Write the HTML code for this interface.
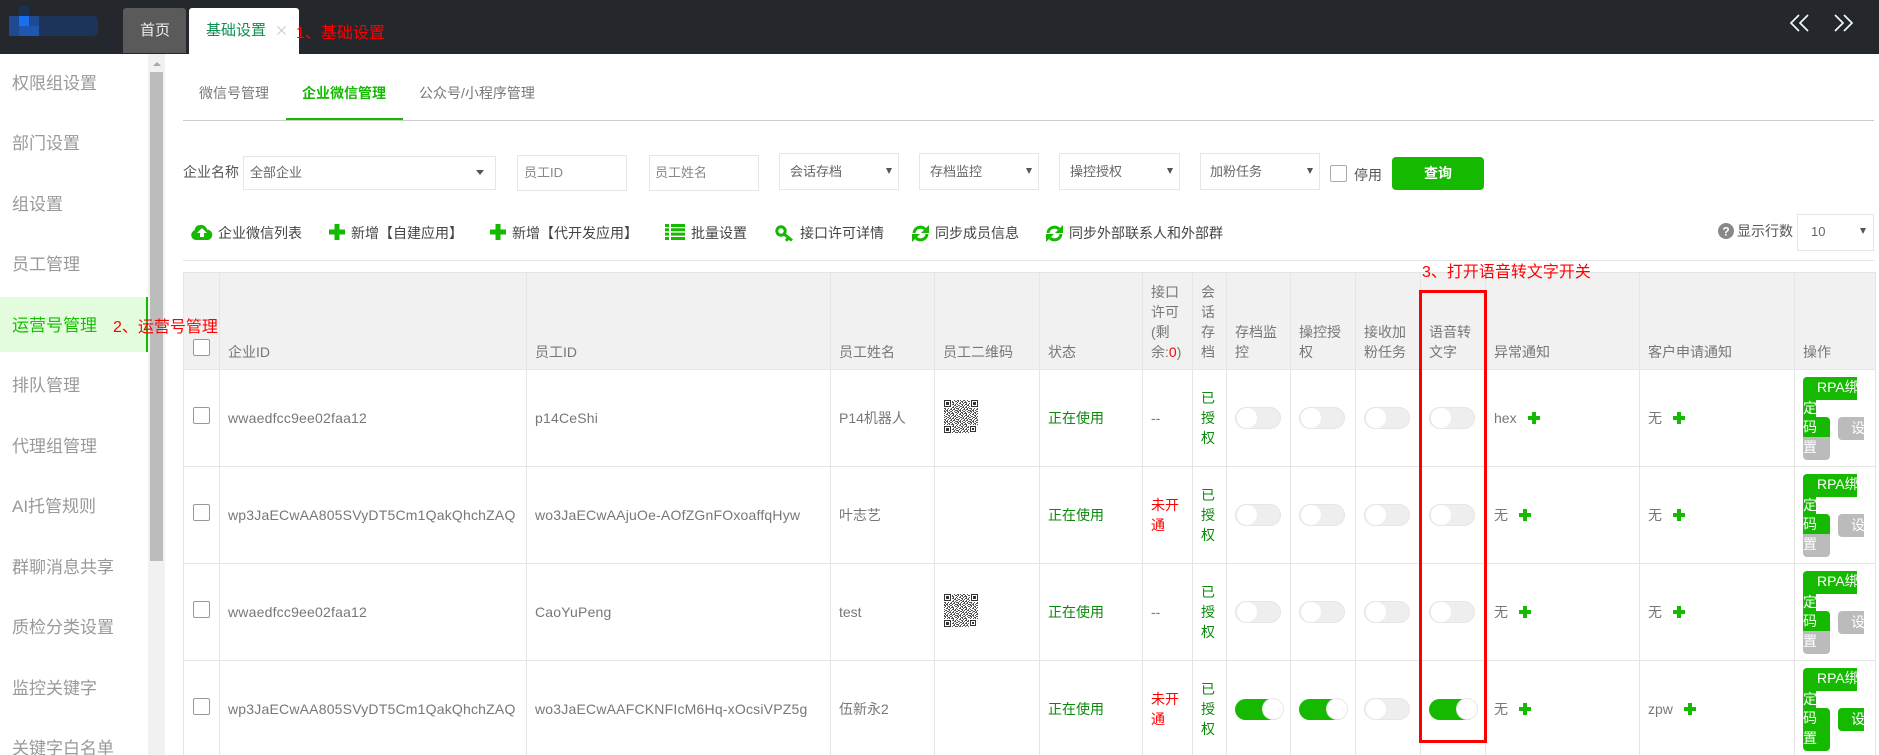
<!DOCTYPE html>
<html lang="zh-CN"><head><meta charset="utf-8"><title>企业微信管理</title>
<style>
html,body{margin:0;padding:0;width:1879px;height:755px;overflow:hidden;background:#fff}
body{position:relative;font:14px/20px "Liberation Sans","Noto Sans CJK SC",sans-serif;color:#666}
.a,.t,.box,.ops{position:absolute}
.t{white-space:nowrap;line-height:20px}
.s{font-size:17px;color:#999;left:12px;line-height:30px}
.r{color:#f00;font-size:16px}
.f{font-size:13px}
.box{border:1px solid #e6e6e6;box-sizing:border-box;background:#fff}
.arr{position:absolute;width:0;height:0;border-left:3px solid transparent;border-right:3px solid transparent;border-top:6px solid #555}
.d{color:#444}
table{position:absolute;left:183px;top:272px;width:1692px;border-collapse:collapse;table-layout:fixed}
th,td{border:1px solid #e5e5e5;padding:0 8px;height:96px;box-sizing:border-box;font-weight:400;text-align:left;overflow:hidden;white-space:nowrap;color:#777}
th{background:#f1f1f1;vertical-align:bottom;padding-bottom:7px;color:#777}
td{vertical-align:middle;background:#fff}
.l{letter-spacing:.2px}
.g{color:#0a8a0a}.red{color:#f00}
.cb{display:block;position:relative;top:-3px;width:17px;height:17px;box-sizing:border-box;border:1px solid #999;border-radius:2px;background:#fff;margin-left:1px}
.sw{display:block;position:relative;width:46px;height:22px;box-sizing:border-box;border-radius:11px;background:#eee;box-shadow:0 0 0 1px #e6e6e6 inset}
.sw i{position:absolute;left:2px;top:1px;width:20px;height:20px;border-radius:50%;background:#fff}
.on{background:#14b900;width:48px;height:21px;box-shadow:none}
.on i{left:28px;top:.5px;box-shadow:0 0 0 1px #e6e6e6}
.p{display:inline-block;position:relative;width:12px;height:12px;margin-left:11px;vertical-align:-1px}
.p:before,.p:after{content:"";position:absolute;background:#14b900}
.p:before{left:4px;top:0;width:4px;height:12px}
.p:after{left:0;top:4px;width:12px;height:4px}
.ops{left:1803px;width:70px;height:97px;color:#fff}
.ops div{position:absolute;overflow:hidden;white-space:nowrap;background:#14b900;color:#fff;line-height:20px}
.b1{left:0;top:8px;width:54px;height:23px;border-radius:4px 0 0 0;padding-left:14px;box-sizing:border-box;line-height:21px!important}
.b2{left:0;top:31px;width:13px;height:17px;line-height:17px!important}
.b3{left:0;top:48px;width:27px;height:20px;border-radius:0 4px 0 0}
.b4{left:0;top:68px;width:27px;height:23px;border-radius:0 0 4px 4px;background:#bbb!important}
.b5{left:35px;top:48px;width:26px;height:23px;border-radius:4px 0 0 4px;padding-left:13px;box-sizing:border-box;background:#bbb!important;line-height:23px!important}
.on2 .b4,.on2 .b5{background:#14b900!important}
</style></head><body>

<div class="a" style="left:0;top:0;width:1879px;height:54px;background:#24272c"></div>
<div class="a" style="left:9px;top:16px;width:30px;height:20px;background:#1f4a92"></div>
<div class="a" style="left:19px;top:6px;width:10px;height:10px;background:#1c3050"></div>
<div class="a" style="left:19px;top:16px;width:10px;height:10px;background:#1a6ef0"></div>
<div class="a" style="left:19px;top:26px;width:20px;height:10px;background:#1f57b0"></div>
<div class="a" style="left:39px;top:16px;width:59px;height:20px;border-radius:0 5px 5px 0;background:#1c335a"></div>

<div class="a" style="left:123px;top:8px;width:63px;height:45px;background:#5a5a5a;border-radius:3px 3px 0 0"></div>
<div class="t" style="left:140px;top:21px;font-size:15px;color:#eee">首页</div>
<div class="a" style="left:189px;top:8px;width:110px;height:46px;background:#fff;border-radius:3px 3px 0 0"></div>
<div class="t" style="left:206px;top:21px;font-size:15px;color:#0d8f50">基础设置</div>
<svg class="a" style="left:277px;top:26px" width="9" height="9"><path d="M.5.5l8 8M8.5.5l-8 8" stroke="#ccc" stroke-width="1.2"/></svg>
<div class="t r" style="left:296px;top:24px">1、基础设置</div>

<svg class="a" style="left:1788px;top:13px" width="66" height="20" fill="none" stroke="#f4f8ff" stroke-width="1.7"><path d="M11 2L3 10l8 8M20 2l-8 8 8 8M47 2l8 8-8 8M56 2l8 8-8 8"/></svg>

<div class="a" style="left:148px;top:54px;width:17px;height:701px;background:#f1f1f1"></div>
<div class="a" style="left:150px;top:72px;width:13px;height:489px;background:#bcbcbc"></div>
<div class="a" style="left:153px;top:62px;width:0;height:0;border-left:4px solid transparent;border-right:4px solid transparent;border-bottom:4px solid #a8a8a8"></div>

<div class="a" style="left:0;top:297px;width:146px;height:55px;background:#e3fcde;border-right:2px solid #14b900"></div>
<div class="t s" style="top:69px">权限组设置</div>
<div class="t s" style="top:129px">部门设置</div>
<div class="t s" style="top:190px">组设置</div>
<div class="t s" style="top:250px">员工管理</div>
<div class="t s" style="top:311px;color:#14c000">运营号管理</div>
<div class="t s" style="top:371px">排队管理</div>
<div class="t s" style="top:432px">代理组管理</div>
<div class="t s" style="top:492px">AI托管规则</div>
<div class="t s" style="top:553px">群聊消息共享</div>
<div class="t s" style="top:613px">质检分类设置</div>
<div class="t s" style="top:674px">监控关键字</div>
<div class="t s" style="top:734px">关键字白名单</div>

<div class="a" style="left:183px;top:120px;width:1691px;height:1px;background:#ccc"></div>
<div class="a" style="left:286px;top:118px;width:117px;height:2px;background:#14b900"></div>
<div class="t" style="left:199px;top:83px;color:#777">微信号管理</div>
<div class="t" style="left:302px;top:83px;color:#14b900;font-weight:700">企业微信管理</div>
<div class="t" style="left:419px;top:83px;color:#777">公众号/小程序管理</div>

<div class="t d" style="left:183px;top:162px;color:#555">企业名称</div>
<div class="box" style="left:243px;top:156px;width:253px;height:34px"></div>
<div class="t f" style="left:250px;top:163px">全部企业</div>
<div class="arr" style="left:476px;top:170px;border-left-width:4px;border-right-width:4px;border-top-width:5px"></div>
<div class="box" style="left:517px;top:155px;width:110px;height:36px"></div>
<div class="t f" style="left:524px;top:163px;color:#888">员工ID</div>
<div class="box" style="left:649px;top:155px;width:110px;height:36px"></div>
<div class="t f" style="left:655px;top:163px;color:#888">员工姓名</div>
<div class="box" style="left:779px;top:153px;width:120px;height:37px"></div>
<div class="t f" style="left:790px;top:162px">会话存档</div>
<div class="arr" style="left:886px;top:168px"></div>
<div class="box" style="left:919px;top:153px;width:120px;height:37px"></div>
<div class="t f" style="left:930px;top:162px">存档监控</div>
<div class="arr" style="left:1026px;top:168px"></div>
<div class="box" style="left:1059px;top:153px;width:121px;height:37px"></div>
<div class="t f" style="left:1070px;top:162px">操控授权</div>
<div class="arr" style="left:1167px;top:168px"></div>
<div class="box" style="left:1200px;top:153px;width:120px;height:37px"></div>
<div class="t f" style="left:1210px;top:162px">加粉任务</div>
<div class="arr" style="left:1307px;top:168px"></div>
<div class="a" style="left:1330px;top:165px;width:17px;height:17px;box-sizing:border-box;border:1px solid #aaa;border-radius:2px"></div>
<div class="t" style="left:1354px;top:165px;color:#555">停用</div>
<div class="a" style="left:1392px;top:157px;width:92px;height:33px;background:#14b900;border-radius:4px;color:#fff;text-align:center;line-height:33px;font-weight:700">查询</div>

<svg class="a" style="left:191px;top:224px" width="22" height="16" viewBox="0 0 22 16"><path d="M5 16a5 5 0 0 1-1.500-9.700A5.500 5.500 0 0 1 9 1a6 6 0 0 1 7 4.500A5.300 5.300 0 0 1 17 16z" fill="#14b900"/><path d="M11 4l5 5h-3v4H9V9H6z" fill="#fff"/></svg>
<div class="t d" style="left:218px;top:223px">企业微信列表</div>
<svg class="a" style="left:329px;top:224px" width="16" height="16"><path d="M5.500 0h5v5.500h5.500v5h-5.500v5.500h-5v-5.500H0v-5h5.500z" fill="#14b900"/></svg>
<div class="t d" style="left:351px;top:223px">新增【自建应用】</div>
<svg class="a" style="left:490px;top:224px" width="16" height="16"><path d="M5.500 0h5v5.500h5.500v5h-5.500v5.500h-5v-5.500H0v-5h5.500z" fill="#14b900"/></svg>
<div class="t d" style="left:512px;top:223px">新增【代开发应用】</div>
<svg class="a" style="left:665px;top:224px" width="20" height="16" fill="#14b900"><path d="M0 0h4v3H0zM6 0h14v3H6zM0 4.300h4v3H0zM6 4.300h14v3H6zM0 8.600h4v3H0zM6 8.600h14v3H6zM0 13h4v3H0zM6 13h14v3H6z"/></svg>
<div class="t d" style="left:691px;top:223px">批量设置</div>
<svg class="a" style="left:775px;top:225px" width="19" height="17" fill="none" stroke="#14b900" stroke-width="3"><circle cx="6" cy="6" r="4.200"/><path d="M9 9l8 6.500M13.500 12.800l-2.500 3"/></svg>
<div class="t d" style="left:800px;top:223px">接口许可详情</div>
<svg class="a" style="left:912px;top:225px" width="17" height="17" viewBox="0 0 17 17"><g fill="none" stroke="#14b900" stroke-width="3"><path d="M2 8A6.500 6.500 0 0 1 13 4"/><path d="M15 9A6.500 6.500 0 0 1 4 13"/></g><path d="M17 0v8h-8zM0 17V9h8z" fill="#14b900"/></svg>
<div class="t d" style="left:935px;top:223px">同步成员信息</div>
<svg class="a" style="left:1046px;top:225px" width="17" height="17" viewBox="0 0 17 17"><g fill="none" stroke="#14b900" stroke-width="3"><path d="M2 8A6.500 6.500 0 0 1 13 4"/><path d="M15 9A6.500 6.500 0 0 1 4 13"/></g><path d="M17 0v8h-8zM0 17V9h8z" fill="#14b900"/></svg>
<div class="t d" style="left:1069px;top:223px">同步外部联系人和外部群</div>

<svg class="a" style="left:1718px;top:223px" width="16" height="16"><circle cx="8" cy="8" r="8" fill="#888"/><text x="8" y="12.500" text-anchor="middle" font-size="12" font-weight="700" font-family="Liberation Sans" fill="#fff">?</text></svg>
<div class="t" style="left:1737px;top:221px;color:#555">显示行数</div>
<div class="box" style="left:1797px;top:214px;width:77px;height:37px"></div>
<div class="t f" style="left:1811px;top:222px">10</div>
<div class="arr" style="left:1860px;top:228px"></div>
<div class="a" style="left:183px;top:260px;width:1691px;height:1px;background:#e5e5e5"></div>

<table>
<colgroup><col style="width:36px"><col style="width:307px"><col style="width:304px"><col style="width:104px"><col style="width:105px"><col style="width:103px"><col style="width:50px"><col style="width:34px"><col style="width:64px"><col style="width:65px"><col style="width:65px"><col style="width:65px"><col style="width:154px"><col style="width:155px"><col style="width:81px"></colgroup>
<tr style="height:97px">
<th><span class="cb" style="margin-bottom:3px"></span></th><th>企业ID</th><th>员工ID</th><th>员工姓名</th><th>员工二维码</th><th>状态</th>
<th>接口<br>许可<br>(剩<br>余:<span class="red">0</span>)</th><th>会<br>话<br>存<br>档</th><th>存档监<br>控</th><th>操控授<br>权</th><th>接收加<br>粉任务</th><th>语音转<br>文字</th><th>异常通知</th><th>客户申请通知</th><th>操作</th>
</tr>
<tr style="height:97px">
<td><span class="cb"></span></td><td class="l">wwaedfcc9ee02faa12</td><td class="l">p14CeShi</td><td>P14机器人</td><td></td><td class="g">正在使用</td><td>--</td><td class="g">已<br>授<br>权</td>
<td><span class="sw"><i></i></span></td><td><span class="sw"><i></i></span></td><td><span class="sw"><i></i></span></td><td><span class="sw"><i></i></span></td>
<td>hex<span class="p"></span></td><td>无<span class="p"></span></td><td></td>
</tr>
<tr style="height:97px">
<td><span class="cb"></span></td><td class="l">wp3JaECwAA805SVyDT5Cm1QakQhchZAQ</td><td class="l">wo3JaECwAAjuOe-AOfZGnFOxoaffqHyw</td><td>叶志艺</td><td></td><td class="g">正在使用</td><td class="red">未开<br>通</td><td class="g">已<br>授<br>权</td>
<td><span class="sw"><i></i></span></td><td><span class="sw"><i></i></span></td><td><span class="sw"><i></i></span></td><td><span class="sw"><i></i></span></td>
<td>无<span class="p"></span></td><td>无<span class="p"></span></td><td></td>
</tr>
<tr style="height:97px">
<td><span class="cb"></span></td><td class="l">wwaedfcc9ee02faa12</td><td class="l">CaoYuPeng</td><td>test</td><td></td><td class="g">正在使用</td><td>--</td><td class="g">已<br>授<br>权</td>
<td><span class="sw"><i></i></span></td><td><span class="sw"><i></i></span></td><td><span class="sw"><i></i></span></td><td><span class="sw"><i></i></span></td>
<td>无<span class="p"></span></td><td>无<span class="p"></span></td><td></td>
</tr>
<tr style="height:97px">
<td><span class="cb"></span></td><td class="l">wp3JaECwAA805SVyDT5Cm1QakQhchZAQ</td><td class="l">wo3JaECwAAFCKNFIcM6Hq-xOcsiVPZ5g</td><td>伍新永2</td><td></td><td class="g">正在使用</td><td class="red">未开<br>通</td><td class="g">已<br>授<br>权</td>
<td><span class="sw on"><i></i></span></td><td><span class="sw on"><i></i></span></td><td><span class="sw"><i></i></span></td><td><span class="sw on"><i></i></span></td>
<td>无<span class="p"></span></td><td>zpw<span class="p"></span></td><td></td>
</tr>
</table>

<svg width="0" height="0" style="position:absolute"><defs>
<pattern id="n" width="13" height="11" patternUnits="userSpaceOnUse"><path fill="none" stroke="#333" stroke-width="1" d="M0 .5h2M3 .5h1M6 .5h2M10 .5h1M1 1.500h1M4 1.500h2M8 1.500h1M11 1.500h2M0 2.500h1M3 2.500h1M5 2.500h1M7 2.500h3M2 3.500h2M6 3.500h1M9 3.500h1M12 3.500h1M0 4.500h1M4 4.500h2M8 4.500h2M11 4.500h1M1 5.500h2M5 5.500h1M7 5.500h1M10 5.500h2M0 6.500h1M3 6.500h2M6 6.500h1M9 6.500h1M12 6.500h1M2 7.500h1M5 7.500h2M8 7.500h2M11 7.500h1M0 8.500h2M4 8.500h1M7 8.500h1M10 8.500h1M12 8.500h1M1 9.500h1M3 9.500h1M6 9.500h2M9 9.500h2M0 10.500h1M2 10.500h2M5 10.500h1M8 10.500h1M11 10.500h2"/></pattern>
<g id="qr"><rect width="34" height="33" fill="url(#n)" opacity=".85"/>
<path fill="#fff" d="M0 0h8v8H0zM26 0h8v8h-8zM0 25h8v8H0zM25 25h9v8h-9z"/>
<path fill="#333" fill-rule="evenodd" d="M0 0h7v7H0zM1 1v5h5V1zM2 2h3v3H2zM27 0h7v7h-7zM28 1v5h5V1zM29 2h3v3h-3zM0 26h7v7H0zM1 27v5h5v-5zM2 28h3v3H2zM26 26h6v6h-6zM27 27v4h4v-4zM28 28h2v2h-2z"/></g>
</defs></svg>
<svg class="a" style="left:944px;top:400px" width="34" height="33" viewBox="0 0 34 33"><use href="#qr"/></svg>
<svg class="a" style="left:944px;top:594px" width="34" height="33" viewBox="0 0 34 33"><use href="#qr"/></svg>

<div class="ops" style="top:369px"><div class="b1">RPA绑</div><div class="b2">定</div><div class="b3">码</div><div class="b4">置</div><div class="b5">设</div></div>
<div class="ops" style="top:466px"><div class="b1">RPA绑</div><div class="b2">定</div><div class="b3">码</div><div class="b4">置</div><div class="b5">设</div></div>
<div class="ops" style="top:563px"><div class="b1">RPA绑</div><div class="b2">定</div><div class="b3">码</div><div class="b4">置</div><div class="b5">设</div></div>
<div class="ops on2" style="top:660px"><div class="b1">RPA绑</div><div class="b2">定</div><div class="b3">码</div><div class="b4">置</div><div class="b5">设</div></div>

<div class="a" style="left:1419px;top:290px;width:68px;height:453px;box-sizing:border-box;border:3px solid #f00"></div>
<div class="t r" style="left:1422px;top:263px">3、打开语音转文字开关</div>
<div class="t r" style="left:113px;top:318px">2、运营号管理</div>

</body></html>
